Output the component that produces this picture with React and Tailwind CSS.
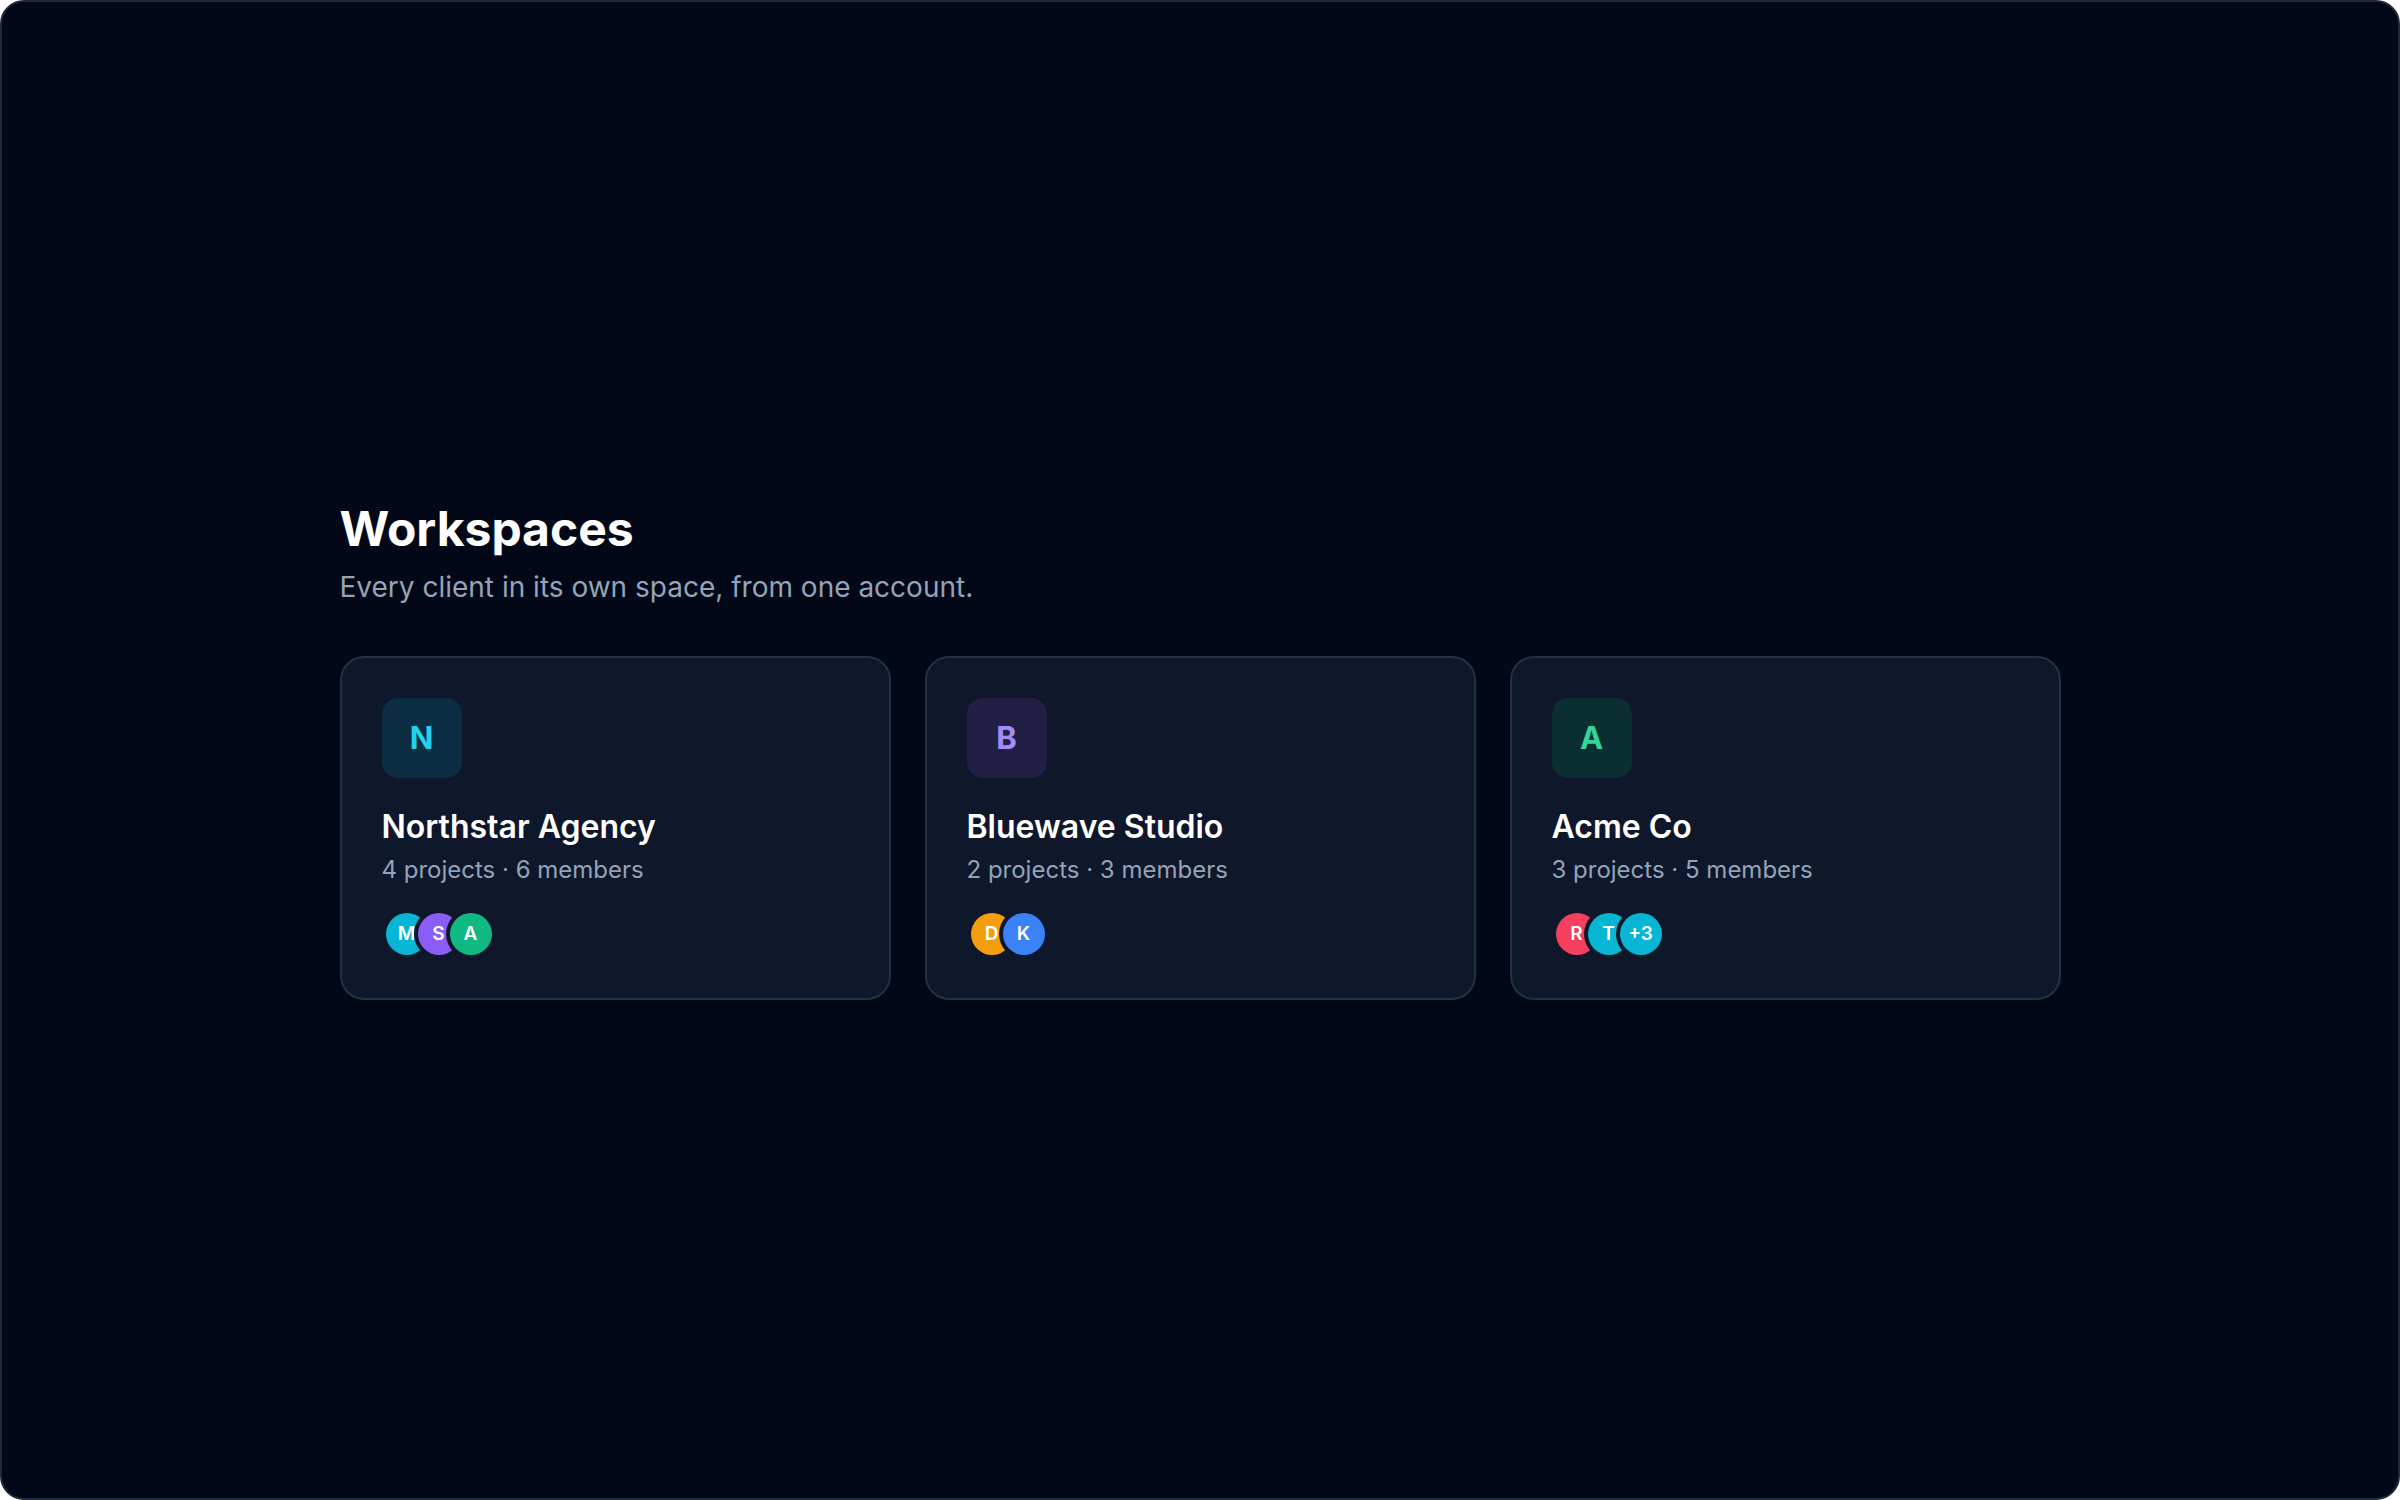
import React from 'react';

const workspaces = [
    {
        letter: 'N', name: 'Northstar Agency', meta: '4 projects · 6 members',
        tile: 'bg-[#0c2d44] text-[#22d3ee]',
        avatars: [['M', 'bg-[#06b6d4]'], ['S', 'bg-[#8b5cf6]'], ['A', 'bg-[#10b981]']],
    },
    {
        letter: 'B', name: 'Bluewave Studio', meta: '2 projects · 3 members',
        tile: 'bg-[#221f44] text-[#a78bfa]',
        avatars: [['D', 'bg-[#f59e0b]'], ['K', 'bg-[#3b82f6]']],
    },
    {
        letter: 'A', name: 'Acme Co', meta: '3 projects · 5 members',
        tile: 'bg-[#0b2e33] text-[#34d399]',
        avatars: [['R', 'bg-[#f43f5e]'], ['T', 'bg-[#06b6d4]'], ['+3', 'bg-[#06b6d4]']],
    },
];

const App = () => {
    return (
        <div className="h-[1500px] w-[2400px] bg-[#020817] flex items-center justify-center rounded-[24px] border-2 border-[#1e293b]" style={{ fontFamily: 'Inter, "Noto Sans", sans-serif' }}>
            <div className="w-[1721px]">
                <h1 className="text-[48px] leading-[58px] font-bold text-white">Workspaces</h1>
                <p className="mt-[10px] text-[28px] leading-[38px] text-[#94a3b8]">Every client in its own space, from one account.</p>
                <div className="mt-[50px] grid grid-cols-3 gap-[34px]">
                    {workspaces.map((w) => (
                        <div key={w.name} className="h-[344px] rounded-[24px] border-2 border-[#243044] bg-[#0f172a] p-[40px]">
                            <div className={`w-[80px] h-[80px] rounded-[16px] flex items-center justify-center text-[31px] font-bold ${w.tile}`}>{w.letter}</div>
                            <div className="mt-[27px] text-[32px] leading-[44px] font-semibold text-white">{w.name}</div>
                            <div className="mt-[4px] text-[24px] leading-[34px] text-[#94a3b8]">{w.meta}</div>
                            <div className="mt-[26px] flex pl-[4px]">
                                {w.avatars.map(([l, c], i) => (
                                    <div key={i} className={`w-[42px] h-[42px] rounded-full ring-[4px] ring-[#0f172a] flex items-center justify-center text-[19px] font-semibold text-white ${c} ${i > 0 ? '-ml-[10px]' : ''}`}>{l}</div>
                                ))}
                            </div>
                        </div>
                    ))}
                </div>
            </div>
        </div>
    );
};

export default App;
